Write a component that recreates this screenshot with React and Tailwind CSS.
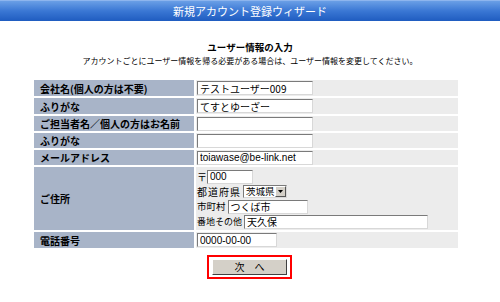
const font = "font-['Noto_Sans_CJK_JP','Noto_Sans',sans-serif]";

const inputCls =
  "h-[14px] bg-white border border-t-[#7a7a7a] border-l-[#7a7a7a] border-b-[#d8d8d8] border-r-[#d8d8d8] px-[2px] text-[10px] leading-[12px] text-black outline-none";

const Field = ({ value, className = "" }) => (
  <input readOnly value={value} className={`${inputCls} ${className}`} />
);

const Row = ({ label, children, h = "h-[16px]" }) => (
  <>
    <div className={`${h} bg-[#a8b4c8] flex items-center pl-[6px] text-[10px] font-bold text-black`}>
      {label}
    </div>
    <div className={`${h} bg-[#ececec] flex items-center pl-[1px]`}>{children}</div>
  </>
);

export default function App() {
  return (
    <div className={`w-[500px] h-[302px] bg-white ${font}`}>
      <div className="h-[21px] bg-gradient-to-b from-[#6a9fe6] via-[#3a77d4] to-[#1f5cc0] border-t border-[#8db5ee] flex items-center justify-center">
        <span className="text-white text-[11px] leading-none">新規アカウント登録ウィザード</span>
      </div>

      <div className="pt-[20px] text-center text-black">
        <div className="text-[9.5px] leading-[12px] font-bold">ユーザー情報の入力</div>
        <div className="text-[8px] leading-[12px] mt-[2px]">
          アカウントごとにユーザー情報を帰る必要がある場合は、ユーザー情報を変更してください。
        </div>
      </div>

      <div className="mt-[13px] ml-[34px] w-[424px] grid grid-cols-[160px_1fr] gap-[2px]">
        <Row label="会社名(個人の方は不要)">
          <Field value="テストユーザー009" className="w-[116px]" />
        </Row>
        <Row label="ふりがな">
          <Field value="てすとゆーざー" className="w-[116px]" />
        </Row>
        <Row label="ご担当者名／個人の方はお名前" h="h-[15px]">
          <Field value="" className="w-[116px]" />
        </Row>
        <Row label="ふりがな" h="h-[15px]">
          <Field value="" className="w-[116px]" />
        </Row>
        <Row label="メールアドレス" h="h-[15px]">
          <input
            readOnly
            value="toiawase@be-link.net"
            className={`${inputCls} w-[116px] font-['Liberation_Sans',sans-serif] text-[8px]`}
          />
        </Row>

        <div className="h-[63px] bg-[#a8b4c8] flex items-center pl-[6px] text-[10px] font-bold text-black">
          ご住所
        </div>
        <div className="h-[63px] bg-[#ececec] flex flex-col pt-[2px] pl-[1px] text-[10px] text-black whitespace-nowrap">
          <div className="h-[15px] flex items-center">
            <span className="w-[10px]">〒</span>
            <Field value="000" className="w-[46px] h-[13px] font-['Liberation_Sans',sans-serif] text-[9px]" />
          </div>
          <div className="h-[15px] flex items-center gap-[2px]">
            <span className="tracking-[1px]">都道府県</span>
            <div className="w-[44px] h-[13px] bg-white border border-t-[#7a7a7a] border-l-[#7a7a7a] border-b-[#d8d8d8] border-r-[#d8d8d8] flex items-center justify-between">
              <span className="pl-[2px] text-[9.5px] leading-none">茨城県</span>
              <span className="w-[11px] h-[11px] bg-[#d4d0c8] border border-t-white border-l-white border-b-[#555] border-r-[#555] flex items-center justify-center">
                <svg width="5" height="3" viewBox="0 0 5 3">
                  <path d="M0 0h5L2.5 3z" fill="#000" />
                </svg>
              </span>
            </div>
          </div>
          <div className="h-[15px] flex items-center gap-[2px]">
            <span className="text-[9.5px]">市町村</span>
            <Field value="つくば市" className="w-[80px] h-[13px]" />
          </div>
          <div className="h-[15px] flex items-center gap-[2px]">
            <span className="text-[9px]">番地その他</span>
            <Field value="天久保" className="w-[184px] h-[13px]" />
          </div>
        </div>

        <Row label="電話番号">
          <input
            readOnly
            value="0000-00-00"
            className={`${inputCls} w-[80px] font-['Liberation_Sans',sans-serif] text-[9px]`}
          />
        </Row>
      </div>

      <div className="mt-[7px] flex justify-center">
        <div className="ml-[-1px] w-[85px] h-[24px] border-2 border-[#ff0000] flex items-center justify-center">
          <button className="w-[75px] h-[16px] bg-[#d4d0c8] border border-t-white border-l-white border-b-[#404040] border-r-[#404040] text-[10px] leading-none text-black">
            次　へ
          </button>
        </div>
      </div>
    </div>
  );
}
